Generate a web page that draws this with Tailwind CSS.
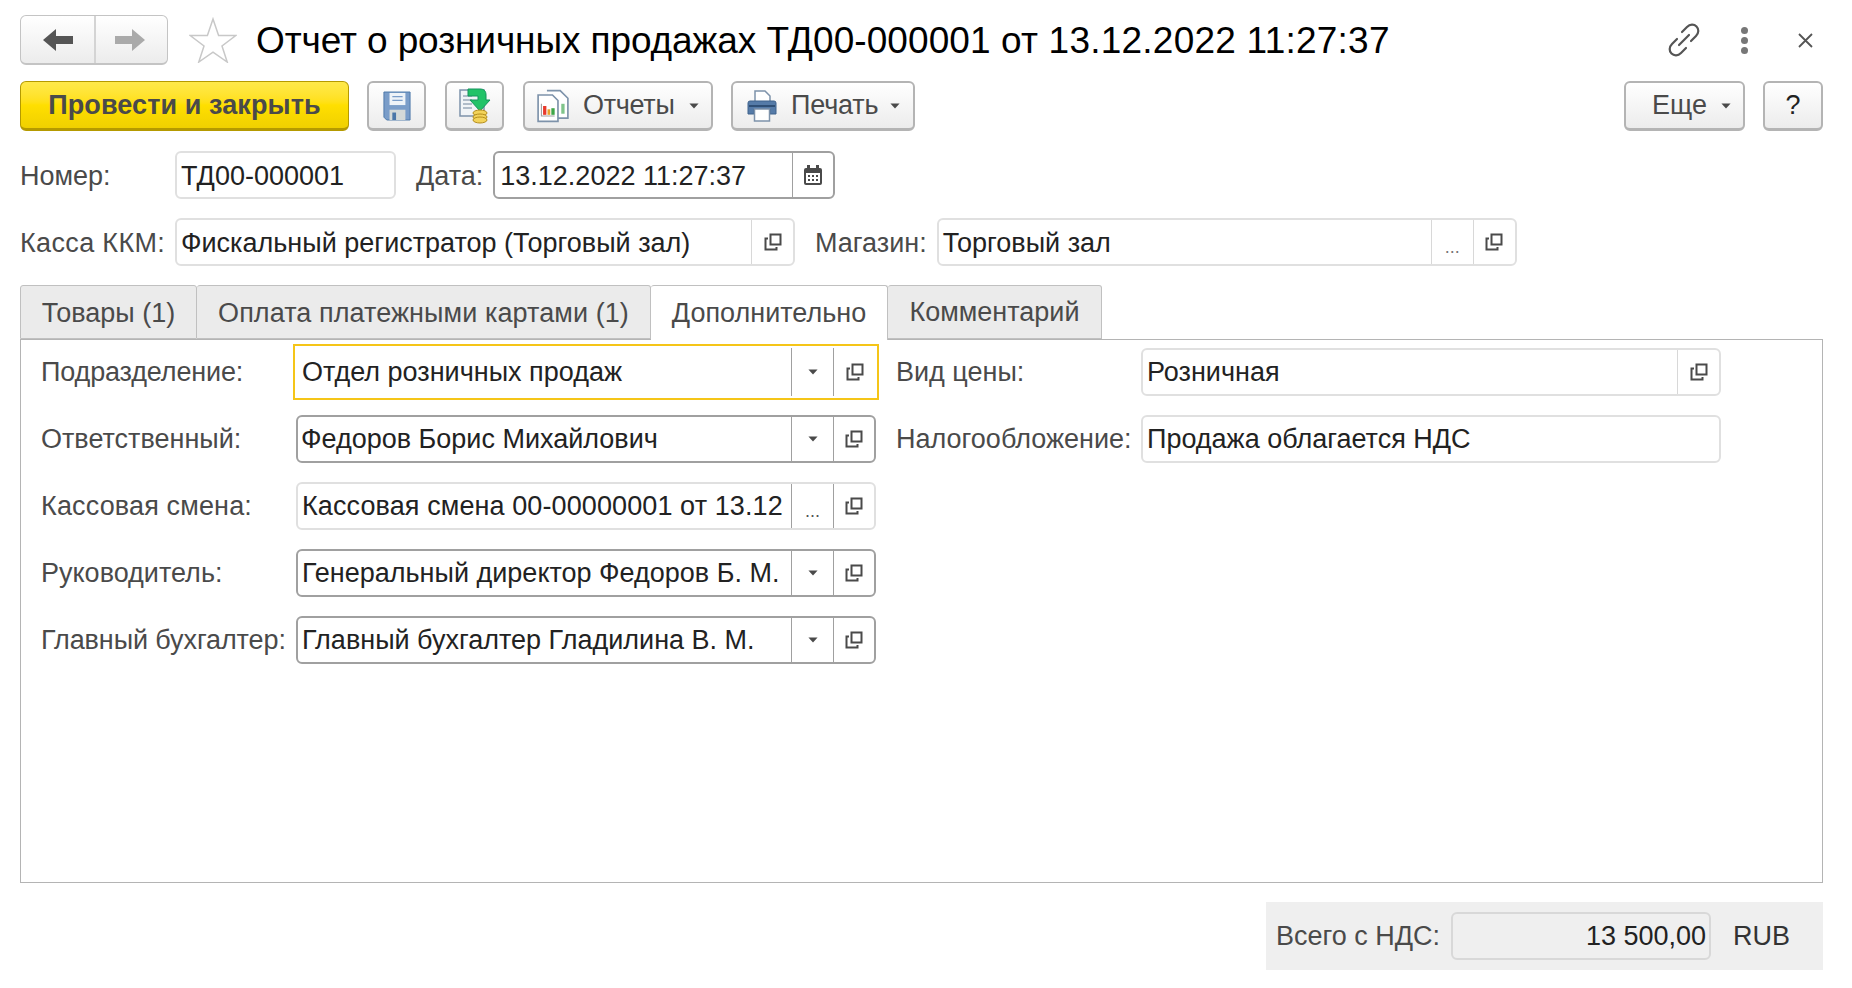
<!DOCTYPE html>
<html lang="ru">
<head>
  <meta charset="UTF-8" />
  <title>Отчет о розничных продажах</title>
  <script src="https://cdn.jsdelivr.net/npm/@tailwindcss/browser@4"></script>
</head>
<body class="bg-white w-[1852px] h-[988px] overflow-hidden font-['Liberation_Sans',Arial,sans-serif] text-[27px] text-[#4a4a4a]">

  <svg class="hidden">
    <symbol id="open" viewBox="0 0 18 18">
      <path d="M6.5 1.500h10v10h-10zM4 5.500H1.500v11h11V14" fill="none" stroke="#4a4a4a" stroke-width="2"/>
    </symbol>
    <symbol id="caret" viewBox="0 0 12 7">
      <path d="M0.500 0.500h11L6 6.500z" fill="#4a4a4a"/>
    </symbol>
  </svg>

  <div class="pl-5 pr-[29px] pt-[15px]">

    <!-- Header -->
    <div class="flex items-center h-[50px]">
      <div class="flex w-[148px] h-[50px] rounded-md border border-[#c4c4c4] border-b-2 bg-linear-to-b from-white to-[#ececec]">
        <div class="w-[75px] pl-[1px] flex items-center justify-center border-r-2 border-[#d4d4d4]">
          <svg width="30" height="24" viewBox="0 0 30 24"><path d="M0 12 13 1v7h17v8H13v7z" fill="#555"/></svg>
        </div>
        <div class="flex-1 flex items-center justify-center pr-[3px]">
          <svg width="30" height="24" viewBox="0 0 30 24"><path d="M30 12 17 1v7H0v8h17v7z" fill="#aaa"/></svg>
        </div>
      </div>
      <svg class="ml-[21px]" width="48" height="46" viewBox="0 0 48 46"><path d="M24 2l5.600 16.500h17.200L33 29l5.200 16L24 35.200 9.800 45 15 29 1.200 18.500h17.200z" fill="#fff" stroke="#c8c8c8" stroke-width="1.500"/></svg>
      <h1 class="ml-[19px] pt-[2px] text-[37px] text-black whitespace-nowrap leading-[50px]"><span class="tracking-[-0.1px]">Отчет о розничных продажах</span> <span class="tracking-[0.08px]">ТД00-000001</span> <span class="tracking-[0.23px]">от 13.12.2022 11:27:37</span></h1>
      <div class="ml-auto flex items-center">
        <svg width="34" height="34" viewBox="0 0 34 34" fill="none" stroke="#555" stroke-width="2.200" stroke-linecap="round"><path d="M15 9l5-5c3-3 7-3 9.500-.5s2.500 6.500-.5 9.500l-5 5M19 25l-5 5c-3 3-7 3-9.500.5S2 24 5 21l5-5M12 22l10-10"/></svg>
        <div class="ml-[40px] flex flex-col gap-[3px]">
          <div class="w-[7px] h-[7px] rounded-full bg-[#777]"></div>
          <div class="w-[7px] h-[7px] rounded-full bg-[#777]"></div>
          <div class="w-[7px] h-[7px] rounded-full bg-[#777]"></div>
        </div>
        <svg class="ml-[50px] mr-[10px]" width="15" height="15" viewBox="0 0 15 15"><path d="M1 1l13 13M14 1 1 14" stroke="#555" stroke-width="1.800"/></svg>
      </div>
    </div>

    <!-- Command bar -->
    <div class="flex items-center h-[50px] mt-[16px]">
      <button class="w-[329px] h-[50px] rounded-md border border-[#b59a00] border-b-[3px] bg-linear-to-b from-[#ffe94a] via-[#ffdf00] to-[#f0d000] font-bold text-[27px] tracking-[0.1px] text-[#4a4a4a]">Провести и закрыть</button>
      <button class="ml-[18px] w-[59px] h-[50px] flex items-center justify-center rounded-md border-2 border-[#b4b4b4] border-b-[3px] bg-linear-to-b from-white to-[#ececec]">
        <svg width="28" height="30" viewBox="0 0 30 32">
          <path d="M1 1h28v30H4l-3-3z" fill="#7a9dc9" stroke="#4a76a8"/>
          <rect x="7" y="2" width="17" height="13" fill="#eef3f8"/>
          <path d="M10 6h11M10 10h11" stroke="#7a9dc9" stroke-width="1.500"/>
          <rect x="7" y="20" width="17" height="11" fill="#d4d9d8"/>
          <rect x="10" y="23" width="4" height="8" fill="#4a76a8"/>
        </svg>
      </button>
      <button class="ml-[19px] w-[59px] h-[50px] flex items-center justify-center rounded-md border-2 border-[#b4b4b4] border-b-[3px] bg-linear-to-b from-white to-[#ececec]">
        <svg width="32" height="36" viewBox="0 0 32 36">
          <rect x="1" y="2" width="24" height="26" fill="#f1f4f7" stroke="#7d92aa" stroke-width="1.500"/>
          <path d="M4 8h9M4 12h9M4 16h9M4 20h9" stroke="#9aa9ba" stroke-width="1.500"/>
          <path d="M9 1h12c4 0 6 2 6 6v5h4L21 23 11 12h8V8H9z" fill="#22c368" stroke="#14945c"/>
          <ellipse cx="21" cy="25" rx="7" ry="3" fill="#f3d35a" stroke="#b58e1c"/>
          <ellipse cx="21" cy="29" rx="7" ry="3" fill="#f3d35a" stroke="#b58e1c"/>
          <ellipse cx="21" cy="32" rx="7" ry="3" fill="#f3d35a" stroke="#b58e1c"/>
        </svg>
      </button>
      <button class="ml-[19px] w-[190px] h-[50px] flex items-center pl-[12px] rounded-md border-2 border-[#b4b4b4] border-b-[3px] bg-linear-to-b from-white to-[#ececec]">
        <svg width="32" height="34" viewBox="2 1 29 30">
          <path d="M11 2h12l7 7v18H21" fill="#fff" stroke="#7d92aa" stroke-width="1.500"/>
          <path d="M3 6h13l5 5v19H3z" fill="#fff" stroke="#7d92aa" stroke-width="1.500"/>
          <path d="M6 14v11h12" fill="none" stroke="#a0a0a0"/>
          <rect x="7.500" y="16" width="3" height="8" fill="#e8392b"/>
          <rect x="11.500" y="19" width="2.500" height="5" fill="#e8a02b"/>
          <rect x="15" y="18" width="3" height="6" fill="#3fa648"/>
          <rect x="24" y="14" width="3" height="9" fill="#7fc48a"/>
        </svg>
        <span class="ml-[14px] tracking-[-0.3px] text-[#4a4a4a]">Отчеты</span>
        <svg class="ml-[14px]" width="10" height="6"><use href="#caret"/></svg>
      </button>
      <button class="ml-[18px] w-[184px] h-[50px] flex items-center pl-[14px] rounded-md border-2 border-[#b4b4b4] border-b-[3px] bg-linear-to-b from-white to-[#ececec]">
        <svg width="30" height="32" viewBox="0 0 30 32">
          <path d="M8 1h10l5 5v8H8z" fill="#fff" stroke="#7d92aa" stroke-width="1.500"/>
          <path d="M3 11h24a2 2 0 0 1 2 2v11h-6v-5H7v5H1V13a2 2 0 0 1 2-2z" fill="#557ba8" stroke="#3f628c"/>
          <path d="M2 16h26" stroke="#2f4f75" stroke-width="2"/>
          <rect x="7.500" y="19" width="15" height="12" fill="#fff" stroke="#7d92aa" stroke-width="1.500"/>
        </svg>
        <span class="ml-[14px] tracking-[-0.2px] text-[#4a4a4a]">Печать</span>
        <svg class="ml-[12px]" width="10" height="6"><use href="#caret"/></svg>
      </button>
      <button class="ml-auto w-[121px] h-[50px] flex items-center pl-[26px] rounded-md border-2 border-[#b4b4b4] border-b-[3px] bg-linear-to-b from-white to-[#ececec]">
        <span class="text-[#4a4a4a]">Еще</span>
        <svg class="ml-[14px]" width="10" height="6"><use href="#caret"/></svg>
      </button>
      <button class="ml-[18px] w-[60px] h-[50px] rounded-md border-2 border-[#b4b4b4] border-b-[3px] bg-linear-to-b from-white to-[#ececec] text-[#222]">?</button>
    </div>

    <!-- Number and date -->
    <div class="flex items-center h-[48px] mt-[20px]">
      <span class="w-[155px] pt-[2px]">Номер:</span>
      <div class="w-[221px] h-[48px] flex items-center pt-[2px] pl-[4px] rounded-md border-2 border-[#e0e0e0] text-[#222]">ТД00-000001</div>
      <span class="ml-[20px] pt-[2px]">Дата:</span>
      <div class="ml-[10px] w-[342px] h-[48px] flex rounded-md border-2 border-[#a0a0a0] text-[#222]">
        <div class="flex-1 flex items-center pt-[2px] pl-[5px]">13.12.2022 11:27:37</div>
        <div class="w-[41px] flex items-center justify-center border-l border-[#a0a0a0]">
          <svg width="18" height="20" viewBox="0 0 18 20">
            <path d="M2 3h14a2 2 0 0 1 2 2v13a2 2 0 0 1-2 2H2a2 2 0 0 1-2-2V5a2 2 0 0 1 2-2z" fill="#4a4a4a"/>
            <rect x="3" y="0" width="3" height="5" fill="#4a4a4a"/><rect x="12" y="0" width="3" height="5" fill="#4a4a4a"/>
            <rect x="2" y="8" width="14" height="10" fill="#fff"/>
            <path d="M4 10h2v2H4zM8 10h2v2H8zM12 10h2v2h-2zM4 14h2v2H4zM8 14h2v2H8zM12 14h2v2h-2z" fill="#4a4a4a"/>
          </svg>
        </div>
      </div>
    </div>

    <!-- Cash register and store -->
    <div class="flex items-center h-[48px] mt-[19px]">
      <span class="w-[155px] pt-[2px] tracking-[0.35px] whitespace-nowrap">Касса ККМ:</span>
      <div class="w-[620px] h-[48px] flex rounded-md border-2 border-[#e0e0e0] text-[#222]">
        <div class="flex-1 flex items-center pt-[2px] pl-[4px]">Фискальный регистратор (Торговый зал)</div>
        <div class="w-[42px] flex items-center justify-center border-l border-[#d8d8d8]"><svg width="18" height="18"><use href="#open"/></svg></div>
      </div>
      <span class="ml-[20px] pt-[2px]">Магазин:</span>
      <div class="ml-[10px] w-[580px] h-[48px] flex rounded-md border-2 border-[#e0e0e0] text-[#222]">
        <div class="flex-1 flex items-center pt-[2px] pl-[4px]">Торговый зал</div>
        <div class="w-[42px] flex items-end justify-center pb-[8px] border-l border-[#d8d8d8] text-[18px] leading-none text-[#777]">...</div>
        <div class="w-[42px] flex items-center justify-center border-l border-[#d8d8d8]"><svg width="18" height="18"><use href="#open"/></svg></div>
      </div>
    </div>

    <!-- Tabs -->
    <div class="flex h-[55px] mt-[19px] relative z-10">
      <div class="w-[177px] h-[54px] flex items-center justify-center pt-[2px] bg-[#ebebeb] border border-[#c0c0c0] rounded-t-[3px]">Товары (1)</div>
      <div class="w-[454px] h-[54px] flex items-center justify-center pt-[2px] bg-[#ebebeb] border border-l-0 border-[#c0c0c0] rounded-t-[3px] tracking-[0.08px]">Оплата платежными картами (1)</div>
      <div class="w-[237px] h-[55px] flex items-center justify-center bg-white border border-b-0 border-l-0 border-[#c0c0c0] rounded-t-[3px]">Дополнительно</div>
      <div class="w-[214px] h-[54px] flex items-center justify-center bg-[#ebebeb] border border-l-0 border-[#c0c0c0] rounded-t-[3px]">Комментарий</div>
    </div>

    <!-- Panel -->
    <div class="w-[1803px] h-[544px] -mt-px border border-[#b4b4b4] pl-5 pt-[8px] flex">
      <div class="w-[855px] flex flex-col gap-[19px]">
        <div class="flex items-center h-[48px]">
          <span class="w-[256px] tracking-[-0.15px] whitespace-nowrap">Подразделение:</span>
          <div class="w-[578px] h-[48px] flex outline-2 outline-[#f5c518] outline-offset-[2px] text-[#222]">
            <div class="flex-1 flex items-center pl-[5px]">Отдел розничных продаж</div>
            <div class="w-[42px] flex items-center justify-center border-l border-[#a0a0a0]"><svg width="10" height="6"><use href="#caret"/></svg></div>
            <div class="w-[42px] flex items-center justify-center border-l border-[#a0a0a0]"><svg width="18" height="18"><use href="#open"/></svg></div>
          </div>
        </div>
        <div class="flex items-center h-[48px]">
          <span class="w-[255px] whitespace-nowrap">Ответственный:</span>
          <div class="w-[580px] h-[48px] flex rounded-md border-2 border-[#a0a0a0] text-[#222]">
            <div class="flex-1 flex items-center pl-[3px]">Федоров Борис Михайлович</div>
            <div class="w-[42px] flex items-center justify-center border-l border-[#a0a0a0]"><svg width="10" height="6"><use href="#caret"/></svg></div>
            <div class="w-[41px] flex items-center justify-center border-l border-[#a0a0a0]"><svg width="18" height="18"><use href="#open"/></svg></div>
          </div>
        </div>
        <div class="flex items-center h-[48px]">
          <span class="w-[255px] tracking-[0.15px] whitespace-nowrap">Кассовая смена:</span>
          <div class="w-[580px] h-[48px] flex rounded-md border-2 border-[#e0e0e0] text-[#222]">
            <div class="flex-1 flex items-center pl-[4px] tracking-[0.1px] whitespace-nowrap overflow-hidden">Кассовая смена 00-00000001 от 13.12</div>
            <div class="w-[42px] flex items-end justify-center pb-[8px] border-l border-[#a0a0a0] text-[18px] leading-none text-[#555]">...</div>
            <div class="w-[41px] flex items-center justify-center border-l border-[#a0a0a0]"><svg width="18" height="18"><use href="#open"/></svg></div>
          </div>
        </div>
        <div class="flex items-center h-[48px]">
          <span class="w-[255px] whitespace-nowrap">Руководитель:</span>
          <div class="w-[580px] h-[48px] flex rounded-md border-2 border-[#a0a0a0] text-[#222]">
            <div class="flex-1 flex items-center pl-[4px] whitespace-nowrap overflow-hidden">Генеральный директор Федоров Б. М.</div>
            <div class="w-[42px] flex items-center justify-center border-l border-[#a0a0a0]"><svg width="10" height="6"><use href="#caret"/></svg></div>
            <div class="w-[41px] flex items-center justify-center border-l border-[#a0a0a0]"><svg width="18" height="18"><use href="#open"/></svg></div>
          </div>
        </div>
        <div class="flex items-center h-[48px]">
          <span class="w-[255px] tracking-[-0.1px] whitespace-nowrap">Главный бухгалтер:</span>
          <div class="w-[580px] h-[48px] flex rounded-md border-2 border-[#a0a0a0] text-[#222]">
            <div class="flex-1 flex items-center pl-[4px] whitespace-nowrap overflow-hidden">Главный бухгалтер Гладилина В. М.</div>
            <div class="w-[42px] flex items-center justify-center border-l border-[#a0a0a0]"><svg width="10" height="6"><use href="#caret"/></svg></div>
            <div class="w-[41px] flex items-center justify-center border-l border-[#a0a0a0]"><svg width="18" height="18"><use href="#open"/></svg></div>
          </div>
        </div>
      </div>
      <div class="flex flex-col gap-[19px]">
        <div class="flex items-center h-[48px]">
          <span class="w-[245px] whitespace-nowrap">Вид цены:</span>
          <div class="w-[580px] h-[48px] flex rounded-md border-2 border-[#e0e0e0] text-[#222]">
            <div class="flex-1 flex items-center pl-[4px]">Розничная</div>
            <div class="w-[42px] flex items-center justify-center border-l border-[#d8d8d8]"><svg width="18" height="18"><use href="#open"/></svg></div>
          </div>
        </div>
        <div class="flex items-center h-[48px]">
          <span class="w-[245px] whitespace-nowrap">Налогообложение:</span>
          <div class="w-[580px] h-[48px] flex items-center pl-[4px] rounded-md border-2 border-[#e0e0e0] text-[#222]">Продажа облагается НДС</div>
        </div>
      </div>
    </div>

    <!-- Totals -->
    <div class="ml-auto mt-[19px] w-[557px] h-[68px] bg-[#efefef] flex items-center pl-[10px]">
      <span class="whitespace-nowrap">Всего с НДС:</span>
      <div class="ml-[11px] w-[260px] h-[48px] flex items-center justify-end pr-[3px] rounded-md border-2 border-[#d8d8d8] text-[#222]">13 500,00</div>
      <span class="ml-[22px] text-[#333]">RUB</span>
    </div>
  </div>
</body>
</html>
